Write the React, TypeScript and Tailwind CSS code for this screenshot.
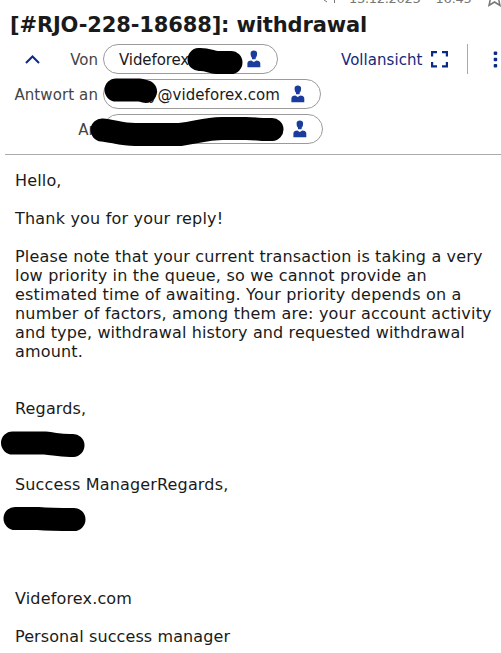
import type { ReactNode } from "react";

function Person() {
  return (
    <svg width="14" height="18" viewBox="0 0 14 18" fill="#1a3c9c" className="shrink-0">
      <path d="M3.6 3.2C3.6 1.500 4.900.6 6.800.6s3.300.9 3.300 2.600c0 2.200-.4 3.800-1.500 4.600v1.400H5V7.800C4 7 3.600 5.400 3.600 3.200Z" />
      <path d="M.4 17.200v-3.600c0-1.700.9-2.700 2.500-2.900l1.400-.2 2.500 1.500 2.500-1.500 1.400.2c1.700.2 2.600 1.200 2.600 2.900v3.600Z" />
    </svg>
  );
}

function Chip({ className, children }: { className: string; children?: ReactNode }) {
  return (
    <div className={`flex h-[30px] items-center justify-end rounded-full border border-[#9b9b9b] ${className}`}>
      {children}
      <Person />
    </div>
  );
}

function Redaction({ d, className, width, height }: { d: string; className: string; width: number; height: number }) {
  return (
    <svg className={`absolute ${className}`} width={width} height={height} viewBox={`0 0 ${width} ${height}`}>
      <path d={d} fill="none" stroke="#000" strokeWidth="23" strokeLinecap="round" strokeLinejoin="round" />
    </svg>
  );
}

function Line({ className = "", children }: { className?: string; children?: ReactNode }) {
  return (
    <div className="h-[19px]">
      <span className={className}>{children}</span>
    </div>
  );
}

export default function App() {
  return (
    <main className="relative h-[653px] w-[501px] overflow-hidden bg-white font-['DejaVu_Sans',Verdana,sans-serif] whitespace-nowrap text-[#1a1a1a]">
      <div className="flex h-[9px] items-end overflow-hidden text-[13px] leading-[18px] text-[#777]">
        <svg width="14" height="9" viewBox="0 0 14 9" className="ml-[323px] shrink-0" fill="none" stroke="#777">
          <path d="M1 0l3 2M11.500 0v3" />
        </svg>
        <span className="ml-[12px] w-[72px] -translate-y-px tracking-[-0.3px]">13.12.2023</span>
        <span className="ml-[15px] w-[36px] -translate-y-px tracking-[-0.3px]">16:45</span>
        <svg width="15" height="9" viewBox="0 0 15 9" className="ml-[16px] shrink-0" fill="none" stroke="#777" strokeWidth="1.5">
          <path d="M3.200 0L2 5.500l5.500-3.500 5.500 3.500L11.800 0" />
        </svg>
      </div>
      <h1 className="ml-[10px] h-[35px] pt-[4px] text-[21px] leading-6 font-bold tracking-[-0.14px]">[#RJO-228-18688]: withdrawal</h1>

      <header className="ml-[5px] h-[111px] border-b border-[#aaa] text-[15px] leading-[30px]">
        <div className="mb-[5px] flex h-[30px] items-center">
          <svg width="16" height="10" viewBox="0 0 16 10" className="ml-5 shrink-0" fill="none" stroke="#0b2a83" strokeWidth="2">
            <path d="M1 9l6.500-6.500L14 9" />
          </svg>
          <span className="w-[57px] pt-px text-right text-[#444]">Von</span>
          <Chip className="ml-[5px] w-[175px] shrink-0 pr-[16px]">
            <span className="mr-auto pt-px pl-[15px] tracking-[-0.1px]">Videforex</span>
          </Chip>
          <span className="ml-[63px] w-[81px] shrink-0 pt-px tracking-[0.05px] text-[#14297c]">Vollansicht</span>
          <svg width="18" height="18" viewBox="0 0 18 18" className="ml-[8px] shrink-0" fill="none" stroke="#0b2a83" strokeWidth="2.2">
            <path d="M2.100 6.500V2.100H7M12 2.100h4.900V6.500M16.900 12v4.400H12M7 16.400H2.100V12" />
          </svg>
          <div className="ml-[19px] h-[30px] w-px shrink-0 bg-[#aaa]" />
          <svg width="5" height="18" viewBox="0 0 5 18" className="ml-[25px] shrink-0" fill="#0b2a83">
            <rect x=".7" y="1.500" width="3.500" height="3.500" rx="1" />
            <rect x=".7" y="7.700" width="3.500" height="3.500" rx="1" />
            <rect x=".7" y="13.900" width="3.500" height="3.500" rx="1" />
          </svg>
        </div>
        <div className="mb-[5px] flex h-[30px] items-center">
          <span className="w-[93px] pt-px text-right tracking-[0.1px] text-[#444]">Antwort an</span>
          <Chip className="ml-[5px] w-[218px] pr-[15px]">
            <span className="mr-[11px] pt-px tracking-[0.05px]">y@videforex.com</span>
          </Chip>
        </div>
        <div className="flex h-[30px] items-center">
          <span className="w-[93px] pt-px text-right text-[#444]">An</span>
          <Chip className="ml-[5px] w-[220px] pr-[15px]" />
        </div>
      </header>

      <article className="pt-4 pl-[15px] text-[16px] leading-[19px] tracking-[0.16px]">
        <Line>Hello,</Line>
        <Line />
        <Line className="tracking-[0.2px]">Thank you for your reply!</Line>
        <Line />
        <Line>Please note that your current transaction is taking a very</Line>
        <Line className="tracking-[0.18px]">low priority in the queue, so we cannot provide an</Line>
        <Line className="tracking-[0.19px]">estimated time of awaiting. Your priority depends on a</Line>
        <Line className="tracking-[0.19px]">number of factors, among them are: your account activity</Line>
        <Line className="tracking-[0.13px]">and type, withdrawal history and requested withdrawal</Line>
        <Line>amount.</Line>
        <Line />
        <Line />
        <Line>Regards,</Line>
        <Line />
        <Line />
        <Line />
        <Line>Success ManagerRegards,</Line>
        <Line />
        <Line />
        <Line />
        <Line />
        <Line />
        <Line>Videforex.com</Line>
        <Line />
        <Line className="tracking-[0.1px]">Personal success manager</Line>
      </article>

      <Redaction className="top-[46px] left-[186px]" width={60} height={30} d="M13 13.500C21 13 25 16 31 16.500L45 16.500" />
      <Redaction className="top-[76px] left-[102px]" width={58} height={30} d="M14 14H38L43.500 15.500" />
      <Redaction className="top-[115px] left-[88px]" width={200} height={35} d="M14 15C26 16 34 20 49 19.500H92C111 17 116 14 134 13.500H158C170 13.500 171 15 184 14.500" />
      <Redaction className="top-[430px] left-0" width={88} height={30} d="M12.500 13H45C56 14 60 16 73 15.500" />
      <Redaction className="top-[505px] left-[2px]" width={86} height={30} d="M13 13.500H36C48 14.500 60 14.500 72 14.500" />
    </main>
  );
}
